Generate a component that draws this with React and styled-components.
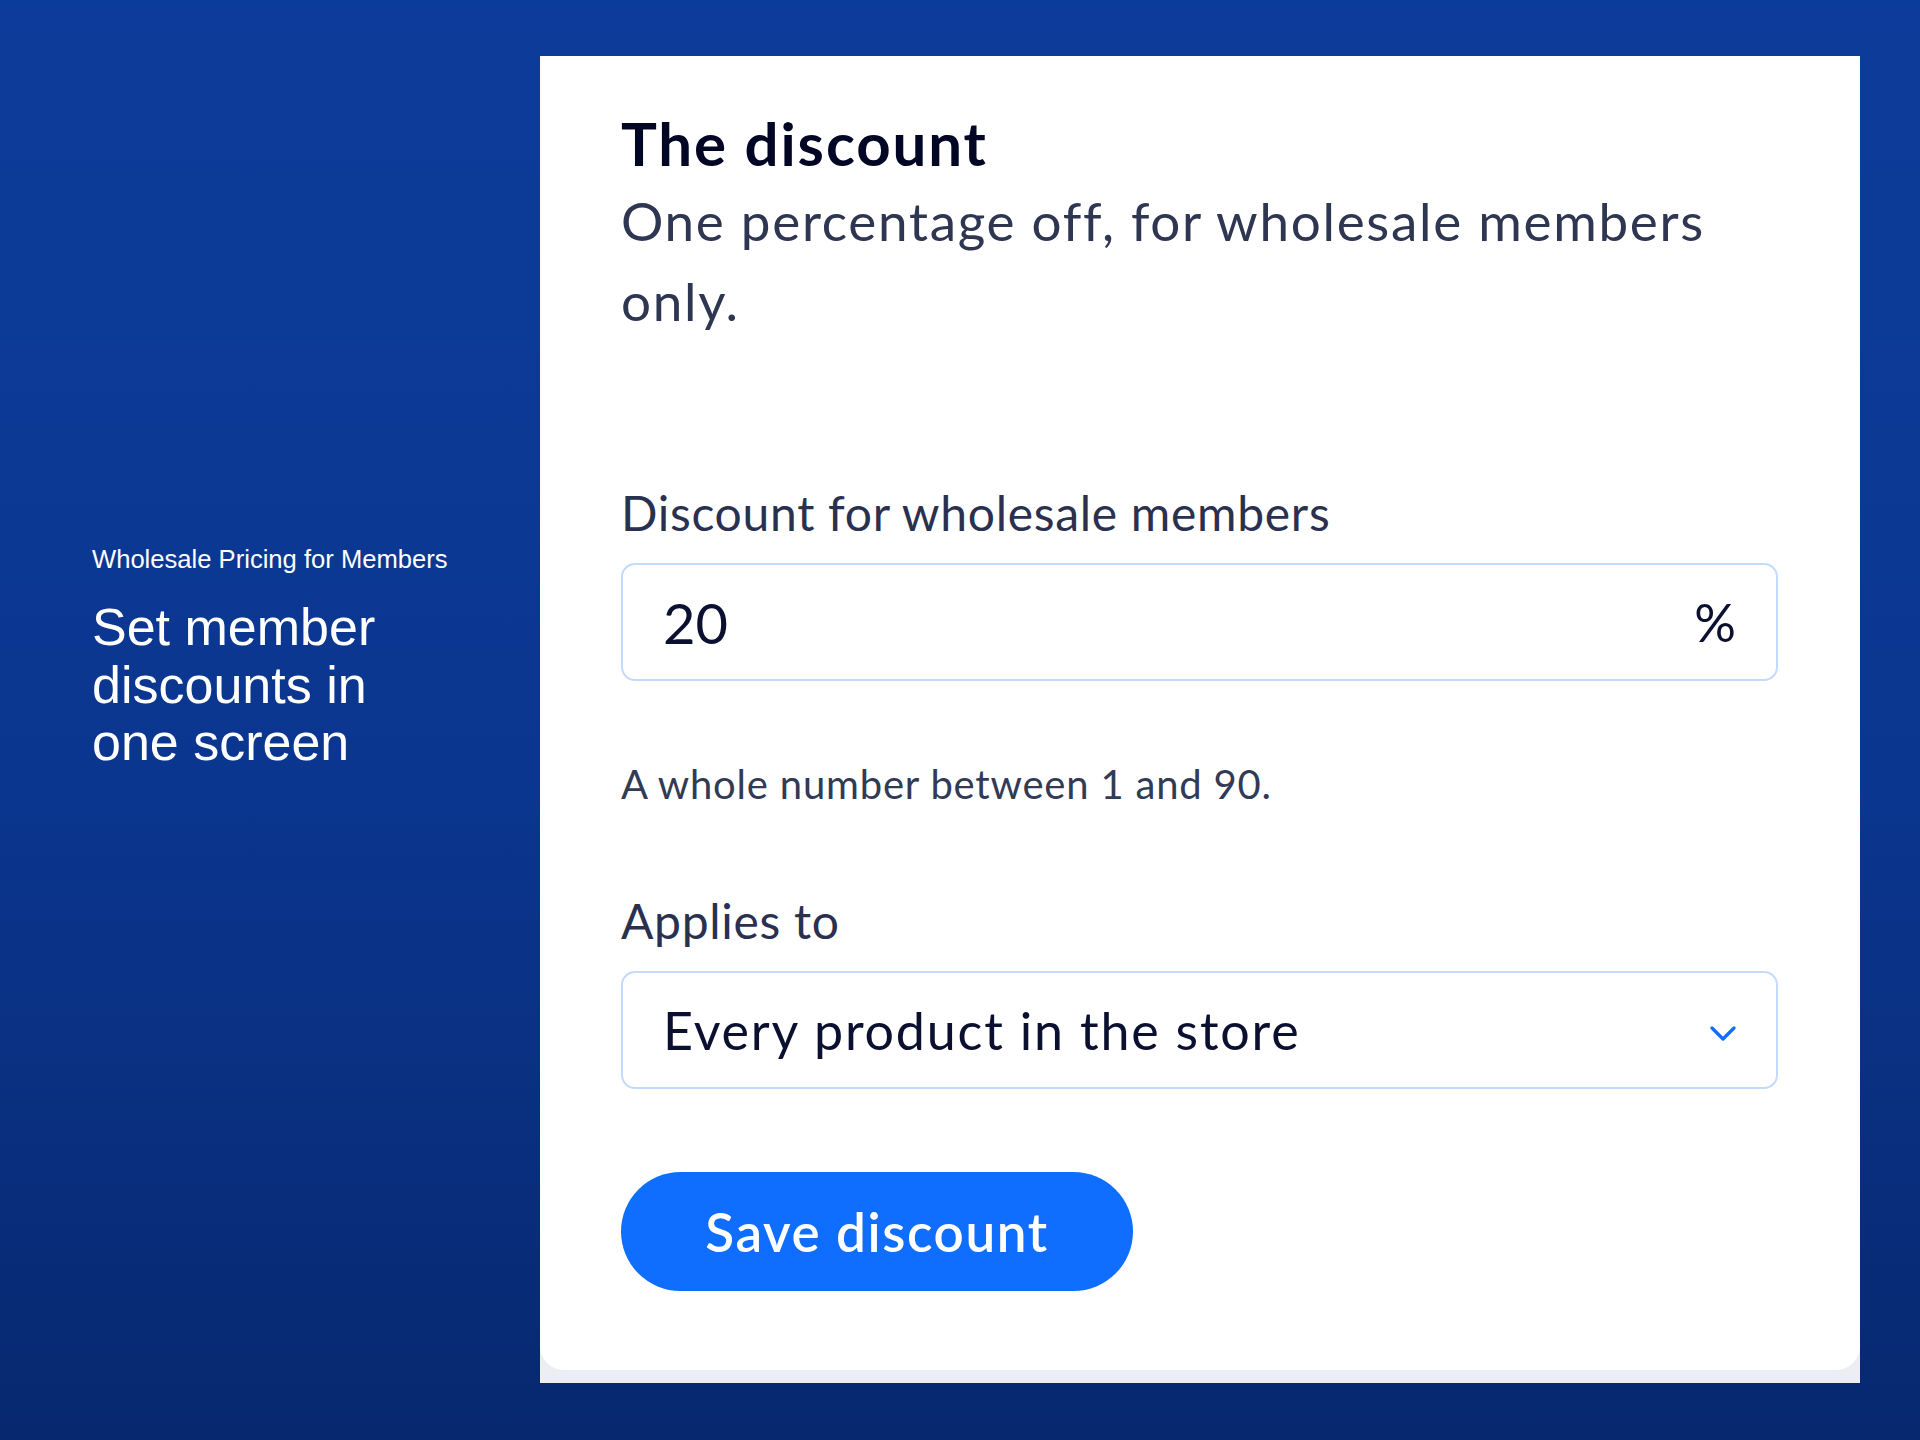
import React from 'react';
import styled, { createGlobalStyle } from 'styled-components';

const GlobalStyle = createGlobalStyle`
  html, body {
    margin: 0;
    padding: 0;
  }

  body {
    min-height: 1440px;
    background: linear-gradient(180deg, #0c3c9b 0%, #0b368f 55%, #07286f 100%);
    font-family: "Lato", "Noto Sans", sans-serif;
  }
`;

const Page = styled.div`
  width: 1920px;
  height: 1440px;
  box-sizing: border-box;
  display: flex;
  align-items: flex-start;
  padding: 56px 60px 0 92px;
`;

const Intro = styled.div`
  width: 448px;
  padding-top: 488px;
  color: #ffffff;
  font-family: "Liberation Sans", Arial, sans-serif;
`;

const Eyebrow = styled.div`
  font-size: 25.6px;
  line-height: 30px;
`;

const Headline = styled.h1`
  margin: 25px 0 0;
  max-width: 340px;
  font-size: 52px;
  font-weight: 400;
  line-height: 57.5px;
`;

const Card = styled.div`
  width: 1320px;
  background: #eceef3;
  padding-bottom: 13px;
`;

const Panel = styled.div`
  background: #ffffff;
  border-radius: 0 0 24px 24px;
  padding: 51px 82px 79px 81px;
  display: flex;
  flex-direction: column;
  align-items: flex-start;
`;

const Title = styled.h2`
  margin: 0;
  font-size: 60px;
  font-weight: 700;
  line-height: 72px;
  letter-spacing: 1.9px;
  color: #000624;
`;

const Subtitle = styled.p`
  margin: 2px 0 0;
  font-size: 53px;
  line-height: 80px;
  letter-spacing: 1.7px;
  color: #2f3651;
`;

const Label = styled.div`
  margin-top: ${(p) => p.$gap}px;
  font-size: 48px;
  line-height: 58px;
  letter-spacing: 0.7px;
  color: #2a3150;
`;

const Field = styled.div`
  margin-top: ${(p) => p.$gap}px;
  width: 100%;
  height: 118px;
  box-sizing: border-box;
  border: 2px solid #c4dafc;
  border-radius: 14px;
  padding: 0 40px;
  display: flex;
  align-items: center;
  justify-content: space-between;
  color: #0b1030;
  font-size: ${(p) => p.$size}px;
  letter-spacing: ${(p) => p.$spacing || 0}px;
`;

const Unit = styled.span`
  font-size: 52px;
  color: #0b1030;
`;

const Help = styled.div`
  margin-top: 77.5px;
  font-size: 40px;
  line-height: 50px;
  letter-spacing: 0.8px;
  color: #323a55;
`;

const Chevron = styled.svg`
  width: 26px;
  height: 15px;
  margin-top: 6px;
`;

const SaveButton = styled.button`
  margin-top: 83px;
  width: 512px;
  height: 119px;
  border: none;
  border-radius: 60px;
  background: #0f6efd;
  color: #ffffff;
  font-family: "Lato", "Noto Sans", sans-serif;
  font-size: 53px;
  font-weight: 600;
  letter-spacing: 1.6px;
  cursor: pointer;
`;

export default function App() {
  return (
    <>
      <GlobalStyle />
      <Page>
        <Intro>
          <Eyebrow>Wholesale Pricing for Members</Eyebrow>
          <Headline>Set member discounts in one screen</Headline>
        </Intro>

        <Card>
          <Panel>
            <Title>The discount</Title>
            <Subtitle>One percentage off, for wholesale members only.</Subtitle>

            <Label $gap={143}>Discount for wholesale members</Label>
            <Field $gap={21} $size={56}>
              <span>20</span>
              <Unit>%</Unit>
            </Field>
            <Help>A whole number between 1 and 90.</Help>

            <Label $gap={83.5}>Applies to</Label>
            <Field $gap={21} $size={52} $spacing={1.8}>
              <span>Every product in the store</span>
              <Chevron viewBox="0 0 26 15" fill="none">
                <path d="M2 2 L13 13 L24 2" stroke="#116dff" strokeWidth="3.2" strokeLinecap="round" strokeLinejoin="round" />
              </Chevron>
            </Field>

            <SaveButton>Save discount</SaveButton>
          </Panel>
        </Card>
      </Page>
    </>
  );
}
